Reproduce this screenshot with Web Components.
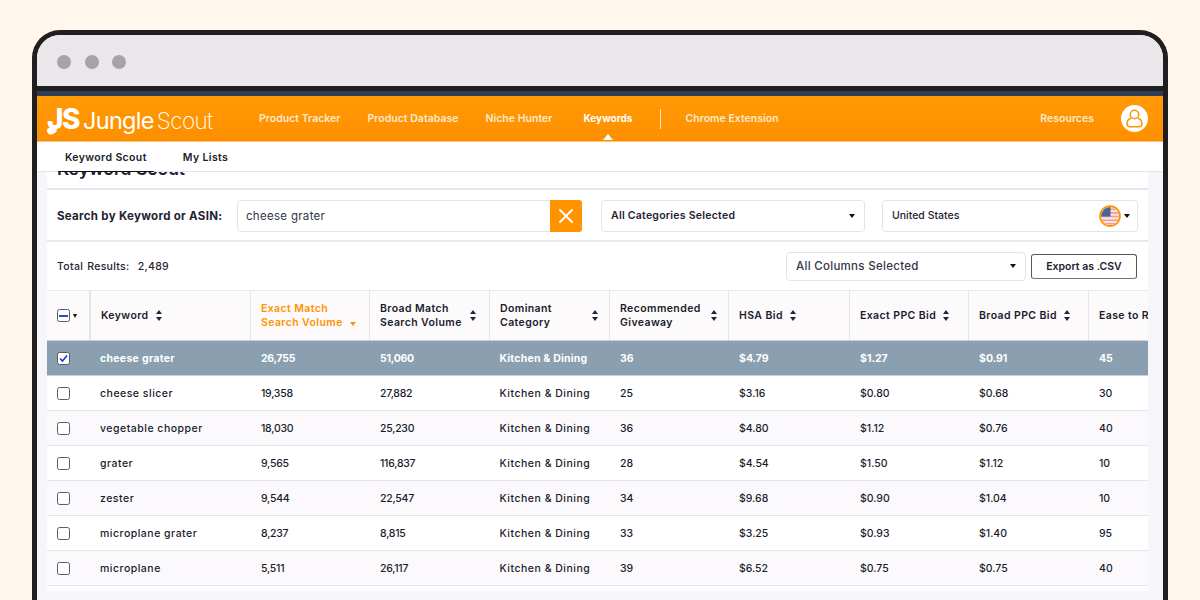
<!DOCTYPE html>
<html><head><meta charset="utf-8"><style>
html,body{margin:0;height:600px;overflow:hidden;background:#fff6ec}
body{font-family:Inter,"Liberation Sans",sans-serif;color:#1f2233}
browser-frame{margin:30px 0 0 32px}
</style></head><body>
<browser-frame>
<top-nav></top-nav>
<sub-nav></sub-nav>
<search-panel></search-panel>
<results-table></results-table>
</browser-frame>
<script>
const def=(n,html,setup)=>customElements.define(n,class extends HTMLElement{constructor(){super();this.attachShadow({mode:'open'}).innerHTML=html;setup&&setup(this.shadowRoot)}});
def('browser-frame',`<style>
:host{display:block;width:1126px;height:570px;border:5px solid #201e20;border-bottom:0;border-radius:28px 28px 0 0;overflow:hidden;background:#f5f5fa}
.chrome{height:49px;background:#e9e7ea;border-bottom:5px solid #201e20;display:flex;align-items:center;gap:13.5px;padding-left:20px;padding-top:2px}
.chrome i{width:14px;height:14px;border-radius:50%;background:#a5a3a6}
.navy{height:5px;background:#2f3d55}
</style><div class="chrome"><i></i><i></i><i></i></div><div class="navy"></div><slot></slot>`);
def('top-nav',`<style>
:host{display:flex;align-items:center;height:45px;background:linear-gradient(#ff9a05,#ff8f00);border-bottom:1px solid #f7c27e;color:#fbe9cf;font-size:10.5px;font-weight:600;position:relative;letter-spacing:.02px}
.logo{display:flex;align-items:baseline;color:#fff;width:222px;padding-left:10px;box-sizing:border-box;line-height:1;white-space:nowrap;letter-spacing:0}
.js{font-weight:800;font-size:28px;letter-spacing:-1.5px;margin-right:4px;position:relative}
.js:before{content:"";position:absolute;left:0;bottom:-1px;width:10px;height:7px;background:#fff;border-radius:3px 1px 4px 4px;transform:rotate(-24deg)}
.j{font-weight:400;font-size:23.500px;letter-spacing:-.7px;margin-right:3px}.s{font-weight:200;font-size:22.500px;letter-spacing:-.6px}
a{white-space:nowrap;margin-right:27px}
.on{color:#fff;font-weight:700;position:relative;font-size:10px;margin:-1px 28px 0 4px}
.on:after{content:"";position:absolute;left:50%;margin-left:-5px;bottom:-16px;border:5px solid transparent;border-top:0;border-bottom:6px solid #fff}
.sep{width:1px;height:20px;background:#fde3bd;margin:0 24px 0 0}
.sp{flex:1}
.av{width:27px;height:27px;border-radius:50%;background:#fff;margin-right:15px;display:flex;align-items:center;justify-content:center}
</style>
<div class="logo"><span class="js">JS</span><span class="j">Jungle</span><span class="s">Scout</span></div>
<a>Product Tracker</a><a>Product Database</a><a>Niche Hunter</a><a class="on">Keywords</a><span class="sep"></span><a>Chrome Extension</a><span class="sp"></span><a>Resources</a>
<span class="av"><svg width="17" height="19" viewBox="0 0 17 19" fill="none" stroke="#ff9300" stroke-width="1.5"><circle cx="8.5" cy="5.5" r="4.2"/><path d="M5 9.5C2.5 10 1 12 1 14.5c0 2 1 3.3 3 3.3h9c2 0 3-1.3 3-3.3 0-2.500-1.500-4.500-4-5"/></svg></span>`);
def('sub-nav',`<style>
:host{display:flex;height:30px;background:#fff;border-bottom:1px solid #e6e6ea;font-size:10.5px;font-weight:600;color:#1b1d2e;box-sizing:border-box;padding-left:21px;gap:22px;position:relative;z-index:2}
a{padding:0 7px;display:flex;align-items:center;height:30px;box-sizing:border-box;letter-spacing:.38px;white-space:nowrap}
.on{border-bottom:1px solid #111;padding-top:1px}
</style><a class="on">Keyword Scout</a><a>My Lists</a>`);
def('search-panel',`<style>
:host{display:block;margin:0 15px 0 10px;background:#fff;font-size:10.5px;color:#1f2233}
.title{height:16px;overflow:hidden;border-bottom:2px solid #e4e8f0;position:relative}
.title b{position:absolute;left:10px;top:-13px;font-size:17.500px;font-weight:600;line-height:20px}
.row1{height:52px;display:flex;align-items:center;border-bottom:2px solid #e8e9f0;padding:1px 10px 0 10px;box-sizing:border-box}
.lab{font-weight:700;width:180px;white-space:nowrap;font-size:11.500px;letter-spacing:.3px}
.in{width:345px;height:32px;border:1px solid #e3e3ec;border-radius:4px;box-sizing:border-box;display:flex;align-items:center;justify-content:space-between;padding-left:8px;font-size:11.500px;color:#333648;letter-spacing:.3px}
.x{width:32px;height:32px;background:#ff9300;border-radius:0 3px 3px 0;display:flex;align-items:center;justify-content:center;margin-right:-1px}
.sel{border:1px solid #e3e3ec;border-radius:4px;height:32px;box-sizing:border-box;display:flex;align-items:center;justify-content:space-between;padding:0 9px;font-weight:600;white-space:nowrap;letter-spacing:.25px}
.car{width:0;height:0;border:3px solid transparent;border-top:4px solid #111;border-bottom:0}
.row2{height:49px;display:flex;align-items:center;padding:0 11px 0 10px;box-sizing:border-box;border-bottom:1px solid #e8e9f0}
.tot{flex:1;font-weight:500;letter-spacing:.3px;word-spacing:1px}
.btn{margin-left:5px;width:106px;height:25px;border:1px solid #55565c;border-bottom-color:#777;border-radius:3px;box-sizing:border-box;display:flex;align-items:center;justify-content:center;font-weight:600;white-space:nowrap}
</style>
<div class="title"><b>Keyword Scout</b></div>
<div class="row1"><span class="lab">Search by Keyword or ASIN:</span>
<div class="in"><span>cheese grater</span><span class="x"><svg width="16" height="16" viewBox="0 0 16 16" stroke="#fff" stroke-width="2" stroke-linecap="round"><path d="M2 2l12 12M14 2L2 14"/></svg></span></div>
<div class="sel" style="width:264px;margin-left:19px"><span>All Categories Selected</span><i class="car"></i></div>
<div class="sel" style="width:256px;margin-left:17px;font-weight:500;padding-right:7px;letter-spacing:0"><span>United States</span><span style="display:flex;align-items:center;gap:3px"><svg width="22" height="22" viewBox="0 0 21 21"><defs><clipPath id="c"><circle cx="10.500" cy="10.500" r="8.500"/></clipPath></defs><g clip-path="url(#c)"><rect width="21" height="21" fill="#fbe4e0"/><path d="M0 4h21M0 7.500h21M0 11h21M0 14.500h21M0 18h21" stroke="#ee9d9a" stroke-width="1.500"/><rect width="11" height="11" fill="#46659a"/></g><circle cx="10.500" cy="10.500" r="9.500" fill="none" stroke="#ff9300" stroke-width="1.600"/></svg><i class="car"></i></span></div></div>
<div class="row2"><span class="tot">Total Results: &nbsp;2,489</span>
<div class="sel" style="width:240px;height:29px;font-size:11.500px;font-weight:500;color:#333648;letter-spacing:.3px"><span>All Columns Selected</span><i class="car"></i></div>
<span class="btn">Export as .CSV</span></div>`);
const cols=[['Exact Match<br>Search Volume',1],['Broad Match<br>Search Volume'],['Dominant<br>Category'],['Recommended<br>Giveaway'],['HSA Bid'],['Exact PPC Bid'],['Broad PPC Bid'],['Ease to Rank']];
const data=[['cheese grater','26,755','51,060','36','$4.79','$1.27','$0.91','45'],['cheese slicer','19,358','27,882','25','$3.16','$0.80','$0.68','30'],['vegetable chopper','18,030','25,230','36','$4.80','$1.12','$0.76','40'],['grater','9,565','116,837','28','$4.54','$1.50','$1.12','10'],['zester','9,544','22,547','34','$9.68','$0.90','$1.04','10'],['microplane grater','8,237','8,815','33','$3.25','$0.93','$1.40','95'],['microplane','5,511','26,117','39','$6.52','$0.75','$0.75','40'],['onion slicer','5,102','9,644','31','$4.10','$0.88','$0.97','25']];
const sort=`<svg class="so" width="6" height="11" viewBox="0 0 6 11" fill="#23253a"><path d="M3 0l3 4H0zM3 11l3-4H0z"/></svg>`;
const rowHtml=(r,i)=>{const [k,e,b,g,h,x,p,ea]=r;const sel=i===0;
return `<div class="r ${sel?'sel':''} ${i%2===0&&i?'alt':''}"><div class="c ck"><i class="box ${sel?'on':''}">${sel?'<svg width="11" height="11" viewBox="0 0 11 11" fill="none" stroke="#2233d8" stroke-width="1.600"><path d="M2 5.500l2.500 2.500L9 2.500"/></svg>':''}</i></div><div class="c kw">${k}</div><div class="c n">${e}</div><div class="c n">${b}</div><div class="c cat">Kitchen &amp; Dining</div><div class="c">${g}</div><div class="c">${h}</div><div class="c">${x}</div><div class="c">${p}</div><div class="c">${ea}</div></div>`};
def('results-table',`<style>
:host{display:block;margin:0 15px 0 10px;background:#fff;overflow:hidden;font-size:10.500px;font-weight:500;color:#1a1c2c;height:300px;box-sizing:border-box}
.r,.h{display:grid;grid-template-columns:44px 160px 119px 120px 120px 119px 121px 119px 120px 120px;width:1150px}
.h{height:50px;background:#fdfafc;border-bottom:1px solid #c9d2dc;box-sizing:border-box;font-weight:600;line-height:14px;letter-spacing:.4px}
.h>div{display:flex;align-items:center;justify-content:space-between;padding:0 13px 0 10px;border-right:1px solid #e4e5ec;box-sizing:border-box;white-space:nowrap;position:relative}
.h>div.tight{justify-content:flex-start;gap:7px}
.h .hot{color:#ff9300}
.h .ck{padding:0 0 0 10px;justify-content:flex-start;gap:3px;border-right-width:2px}
.r{height:35px;border-bottom:1px solid #e3e5ee;box-sizing:border-box;align-items:center;white-space:nowrap}
.r.alt{background:#fbf9fb}
.r.sel{background:#8aa0b0;color:#fff;font-weight:700;border-bottom-color:#c9d2dc}
.c{padding-left:10px}.kw{font-weight:500;padding-left:9px;letter-spacing:.5px}.ck{display:flex;padding-left:10px}
.sel .kw{font-weight:700;letter-spacing:.3px}
.n{letter-spacing:-.25px;padding-left:10px}.cat{padding-left:9.500px;letter-spacing:.5px}.sel .cat{letter-spacing:.2px}
.box{width:13px;height:13px;border:1px solid #5b5b63;border-radius:2.500px;background:#fff;display:flex;align-items:center;justify-content:center;box-sizing:border-box}
.dash{width:9px;height:2px;background:#2f47cf;display:block}
.car{width:0;height:0;border:2.500px solid transparent;border-top:4px solid #111;border-bottom:0}
.tri{width:0;height:0;border:3px solid transparent;border-top:4px solid #ff9300;border-bottom:0;position:absolute;right:13px;top:31px}
</style>
<div class="h"><div class="ck"><i class="box"><i class="dash"></i></i><i class="car"></i></div><div class="tight">Keyword ${sort}</div>
${cols.map((c,i)=>i===0?`<div class="hot">${c[0]}<i class="tri"></i></div>`:`<div class="${i>3?'tight':''}" ${i===2||i===3?'style="padding-right:11px"':''}><span>${c[0]}</span>${sort}</div>`).join('')}</div>
${data.map(rowHtml).join('')}`);
</script></body></html>
